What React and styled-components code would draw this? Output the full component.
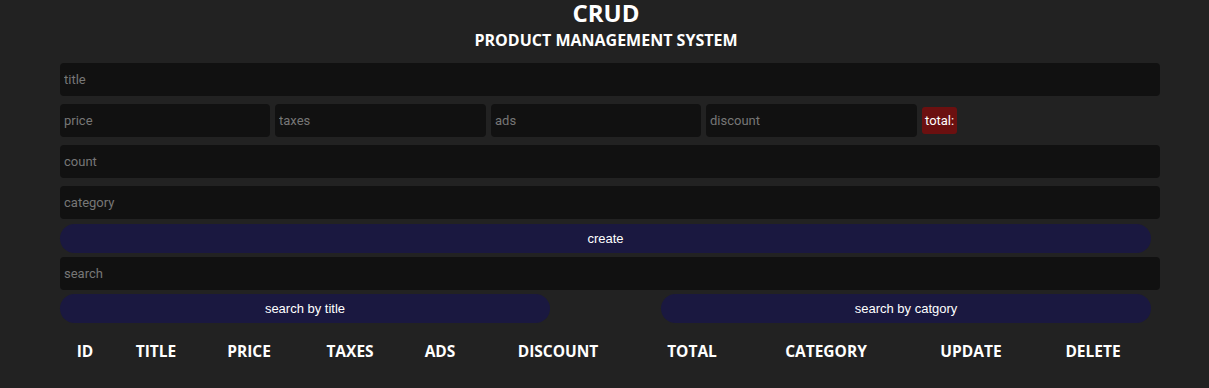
import React from 'react';
import styled, { createGlobalStyle } from 'styled-components';

const GlobalStyle = createGlobalStyle`
  body {
    margin: 0;
    background: #222;
    color: #fff;
    font-family: "Open Sans", "Liberation Sans", sans-serif;
  }
  * { box-sizing: border-box; }
`;

const Crud = styled.div`
  padding: 0 49px 0 60px;
`;

const Head = styled.div`
  padding-right: 8px;
  text-align: center;
`;

const Title = styled.h2`
  margin: 0;
  font-size: 24px;
  line-height: 26px;
  font-weight: 700;
`;

const Subtitle = styled.p`
  margin: 3px 0 0;
  font-size: 16px;
  line-height: 22px;
  font-weight: 700;
`;

const Inputs = styled.div`
  margin-top: 12px;
  display: flex;
  flex-direction: column;
`;

const Field = styled.input`
  width: ${p => p.$w ? p.$w + 'px' : '100%'};
  height: 33px;
  margin: 0 0 8px;
  padding: 0 4px;
  background: #111;
  border: none;
  outline: none;
  border-radius: 4px;
  color: #fff;
  font-family: Roboto, "Liberation Sans", sans-serif;
  font-size: 13px;

  &::placeholder {
    color: #777;
  }
`;

const PriceRow = styled.div`
  display: flex;
  align-items: center;
  gap: 5px;
  margin-bottom: 8px;

  ${Field} {
    margin: 0;
  }
`;

const Total = styled.small`
  height: 27px;
  padding: 0 3px;
  display: flex;
  align-items: center;
  background: #6b1010;
  border-radius: 3px;
  font-family: Roboto, "Liberation Sans", sans-serif;
  font-size: 13px;
`;

const Button = styled.button`
  width: ${p => p.$w ? p.$w + 'px' : '1091px'};
  height: 29px;
  border: none;
  border-radius: 15px;
  background: #1a1840;
  color: #fff;
  font-family: "Liberation Sans", Arial, sans-serif;
  font-size: 13px;
  cursor: pointer;
`;

const CreateButton = styled(Button)`
  margin: -3px 0 4px;
`;

const SearchRow = styled.div`
  width: 1091px;
  display: flex;
  justify-content: space-between;
  margin-top: -4px;
`;

const Table = styled.table`
  margin-top: 14px;
  border-collapse: collapse;
  table-layout: fixed;
`;

const Th = styled.th`
  width: ${p => p.$w}px;
  padding: 0;
  height: 28px;
  font-size: 15.5px;
  font-weight: 700;
  text-align: center;
`;

const columns = [
  ['ID', 50],
  ['TITLE', 92],
  ['PRICE', 94],
  ['TAXES', 108],
  ['ADS', 72],
  ['DISCOUNT', 164],
  ['TOTAL', 104],
  ['CATEGORY', 164],
  ['UPDATE', 126],
  ['DELETE', 118],
];

export default function App() {
  return (
    <>
      <GlobalStyle />
      <Crud>
        <Head>
          <Title>CRUD</Title>
          <Subtitle>PRODUCT MANAGEMENT SYSTEM</Subtitle>
        </Head>
        <Inputs>
          <Field type="text" placeholder="title" />
          <PriceRow>
            <Field $w={210} type="number" placeholder="price" />
            <Field $w={211} type="number" placeholder="taxes" />
            <Field $w={210} type="number" placeholder="ads" />
            <Field $w={211} type="number" placeholder="discount" />
            <Total>total:</Total>
          </PriceRow>
          <Field type="number" placeholder="count" />
          <Field type="text" placeholder="category" />
          <CreateButton>create</CreateButton>
          <Field type="text" placeholder="search" />
          <SearchRow>
            <Button $w={490}>search by title</Button>
            <Button $w={490}>search by catgory</Button>
          </SearchRow>
        </Inputs>
        <Table>
          <thead>
            <tr>
              {columns.map(([name, w]) => (
                <Th key={name} $w={w}>{name}</Th>
              ))}
            </tr>
          </thead>
        </Table>
      </Crud>
    </>
  );
}
